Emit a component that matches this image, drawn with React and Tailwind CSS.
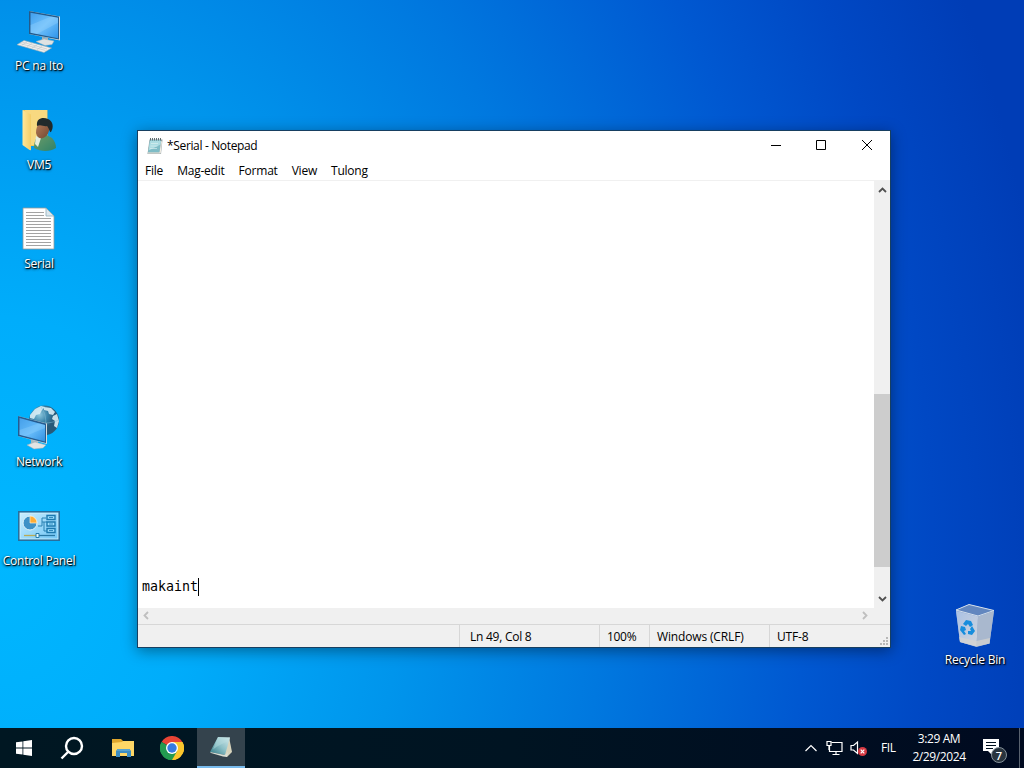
import React from 'react';

const PcIcon = () => (
  <svg width="48" height="48" viewBox="0 0 48 48">
    <defs>
      <linearGradient id="pcScreen" x1="0" y1="0" x2="1" y2="1">
        <stop offset="0" stopColor="#3f9fee" />
        <stop offset="0.5" stopColor="#6fc0fb" />
        <stop offset="1" stopColor="#2f94ea" />
      </linearGradient>
    </defs>
    <path d="M14 4l31 5.500v24L14 27z" fill="#d8dcdd" />
    <path d="M14 4l30 5.500v23L14 27z" fill="#235a8b" />
    <path d="M15.500 5.800l27.500 5v20.400l-27.500-5.400z" fill="url(#pcScreen)" />
    <path d="M15.500 18L36 9.600l7 1.200v5L22 27l-6.500-1.200z" fill="#a4dcff" opacity=".3" />
    <path d="M27 30l6 1v3l-6-1z" fill="#a9b3b8" />
    <path d="M21 34.500l8-2.500 10 2-2 3.500-7 1z" fill="#dfe3e3" stroke="#9eb0b8" strokeWidth=".5" />
    <path d="M9 33.500L36.500 41 29 45.500 2 37.700z" fill="#f0efed" stroke="#9faeb5" strokeWidth=".6" />
    <path d="M7 35l25 7M5 36.500l25.500 7M12 35l-5 3M17 36.500l-5 3M22 38l-5 3M27 39.500l-5 3" stroke="#bcc2c5" strokeWidth=".6" />
  </svg>
);

const UserFolderIcon = () => (
  <svg width="48" height="48" viewBox="0 0 48 48">
    <defs>
      <linearGradient id="folderFront" x1="0" y1="0" x2="1" y2="0">
        <stop offset="0" stopColor="#ffe79a" />
        <stop offset="1" stopColor="#f4cd67" />
      </linearGradient>
      <linearGradient id="userBody" x1="0" y1="0" x2="1" y2="1">
        <stop offset="0" stopColor="#6f9c68" />
        <stop offset="1" stopColor="#2f8268" />
      </linearGradient>
      <linearGradient id="userFace" x1="0" y1="0" x2="1" y2="1">
        <stop offset="0" stopColor="#b87b58" />
        <stop offset="1" stopColor="#704832" />
      </linearGradient>
    </defs>
    <path d="M8 4h24.500v36H14z" fill="#efc65c" />
    <path d="M10 4h22v35H15z" fill="#f8d980" />
    <path d="M7.500 4L16 8.500v35.800L14.500 44l-7-5z" fill="url(#folderFront)" />
    <path d="M19 42c0-9 4-14 11-14l7 4c3 3 4 7 4 10-6 4-15 4-22 0z" fill="url(#userBody)" />
    <path d="M21 30l5 2-3 9-3-3z" fill="#e5edde" />
    <path d="M25 16c-3 3-4 7-4 11 1 5 5 7 9 4 5-4 5-10 3-14z" fill="url(#userFace)" />
    <path d="M22 20c-1-8 6-9 11-7 5 2 6 8 3 13-1 1-2-4-4-6-3 1-6-2-10 0z" fill="#202a2b" />
  </svg>
);

const TextFileIcon = () => (
  <svg width="48" height="48" viewBox="0 0 48 48">
    <path d="M8 3h23l8 8v33H8z" fill="#fff" stroke="#96999a" strokeWidth=".8" />
    <path d="M31 3v8h8z" fill="#dce8ee" stroke="#8eacba" strokeWidth=".8" />
    <path d="M11 7.500h18M11 10.500h18M11 13.500h25M11 16.500h25M11 19.500h25M11 22.500h25M11 25.500h25M11 28.500h25M11 31.500h25M11 34.500h25M11 37.500h25M11 40.500h25" stroke="#989898" strokeWidth=".9" />
  </svg>
);

const NetworkIcon = () => (
  <svg width="48" height="48" viewBox="0 0 48 48">
    <defs>
      <radialGradient id="globe" cx="35%" cy="30%">
        <stop offset="0" stopColor="#8fc9df" />
        <stop offset="0.55" stopColor="#3984aa" />
        <stop offset="1" stopColor="#285978" />
      </radialGradient>
      <linearGradient id="netScreen" x1="0" y1="0" x2="1" y2="1">
        <stop offset="0" stopColor="#459fe9" />
        <stop offset="0.55" stopColor="#65bbfa" />
        <stop offset="1" stopColor="#328fe0" />
      </linearGradient>
    </defs>
    <circle cx="29" cy="17.500" r="15" fill="url(#globe)" />
    <path d="M15 12l5-6 6-3 4 1-3 3-2 4-4 1-2 4-4-1zM29 4l7 1 4 4-2 3-4-1-1-3-4-1zM38 13l4-2 2 7-2 7-3-2 1-5-3-2z" fill="#d8edf5" opacity=".9" />
    <path d="M26 4c6 8 6 18 2 28M15 18c9 3 20 3 29-1" stroke="#82bdd4" strokeWidth=".5" fill="none" />
    <path d="M16 36l7 2v5h-7z" fill="#a9b9bf" />
    <path d="M12 42l8-3 11 3-3 3-9 1z" fill="#e2e4e3" stroke="#9dadb5" strokeWidth=".5" />
    <path d="M3 13l29 7.500V41L3 33z" fill="#d6dcde" />
    <path d="M3 13l28 7.500V40L3 33z" fill="#255c91" />
    <path d="M4.500 15l25.500 7v16.500L4.500 31.800z" fill="url(#netScreen)" />
    <path d="M4.500 27L24 20.300l6 1.700v3L10 33.300l-5.500-1.500z" fill="#9ad8ff" opacity=".3" />
  </svg>
);

const ControlPanelIcon = () => (
  <svg width="48" height="48" viewBox="0 0 48 48">
    <defs>
      <linearGradient id="cpFill" x1="0" y1="0" x2="1" y2="1">
        <stop offset="0" stopColor="#c9edff" />
        <stop offset="1" stopColor="#70c6f5" />
      </linearGradient>
    </defs>
    <rect x="3" y="9" width="42" height="30" fill="#286f9d" />
    <rect x="5" y="11" width="38" height="26" fill="url(#cpFill)" stroke="#d8f4ff" strokeWidth=".8" />
    <circle cx="15" cy="21" r="7" fill="#3e91c7" stroke="#dff4fc" strokeWidth="1" />
    <path d="M15 21v-7a7 7 0 0 1 7 7z" fill="#ffad37" stroke="#fff1d4" strokeWidth=".7" />
    <path d="M23 24h4v-8h4M27 20h5M29 20v9h3" stroke="#2880b2" fill="none" />
    <path d="M32 13.500h8v4h-8zM32 20h8v4h-8zM32 26.500h8v4h-8z" fill="#9de0ff" stroke="#1c79af" strokeWidth="1.400" />
    <path d="M34 15.500h4M34 22h4M34 28.500h4" stroke="#318bc0" />
    <path d="M9 33.500h12" stroke="#b9ab56" strokeWidth="1.300" />
    <path d="M24 33.500h16" stroke="#2878a5" strokeWidth="1.300" />
    <path d="M21 31.500h3v4h-3z" fill="#e8faff" stroke="#247dad" />
  </svg>
);

const RecycleBinIcon = () => (
  <svg width="48" height="48" viewBox="0 0 48 48">
    <defs>
      <linearGradient id="binFront" x1="0" y1="0" x2="1" y2="1">
        <stop offset="0" stopColor="#a9c1e4" />
        <stop offset="1" stopColor="#d0d4dc" />
      </linearGradient>
    </defs>
    <path d="M5 9L18 3.500 43 9.500l-4.500 33-13 3.500L9 41z" fill="#8eabd5" />
    <path d="M5 9l22 6 16-5.500L18 3.500z" fill="#6387bf" stroke="#d3deeb" strokeWidth="1" />
    <path d="M5 10l22 5.500-1.500 30L9 41z" fill="url(#binFront)" />
    <path d="M27 15.500L43 10l-4.500 32.500-13 3z" fill="#a9b8ce" />
    <path d="M8 36l17.500 4L39 37l-.5 5.500-13 3L9 41z" fill="#d7d4d0" opacity=".7" />
    <path d="M12 23l3-4 5 1 2 4-3 2-2-3-2 2zM21 25l3 5-3 4-4-1v-3h3l-1-2zM10 25l4 1 1 3-2 1 2 3-2 1-4-5z" fill="#168ddd" />
  </svg>
);

const NotepadIcon = () => (
  <svg width="16" height="17" viewBox="0 0 16 17">
    <path d="M2.500 1.500h13L14 16H.5z" fill="#93a1a5" />
    <path d="M3 2h11l-1.500 12.500H1z" fill="#7fbcc6" />
    <path d="M3 2.500h11l-.4 4-12 6z" fill="#b8e4e8" opacity=".8" />
    <path d="M1 14.500h11.500L14.200 3l.8.500-1.300 12H1z" fill="#f0ede4" />
    <path d="M4 5.500h7M3.500 8h7M3 10.500h7" stroke="#e2f3f4" strokeWidth=".6" />
    <path d="M3.500 0v2.500M5.500 0v2.500M7.500 0v2.500M9.500 0v2.500M11.500 0v2.500M13.500 0v2.500" stroke="#4f6064" strokeWidth=".9" />
  </svg>
);

const desktopItems = [
  { name: 'PC na Ito', icon: PcIcon, spacing: 'tracking-[-0.2px]' },
  { name: 'VM5', icon: UserFolderIcon, spacing: 'tracking-[-0.3px]' },
  { name: 'Serial', icon: TextFileIcon, spacing: 'tracking-[-0.2px]' },
  null,
  { name: 'Network', icon: NetworkIcon, spacing: 'tracking-[-0.25px]' },
  { name: 'Control Panel', icon: ControlPanelIcon, spacing: 'tracking-[-0.25px]' },
];

const menuItems = ['File', 'Mag-edit', 'Format', 'View', 'Tulong'];

const DesktopItem = ({ item }) => (
  <div className="flex h-[99px] w-[78px] flex-col items-center">
    <item.icon />
    <span
      className={`mt-[3px] whitespace-nowrap text-xs leading-4 text-white [text-shadow:1px_1px_1px_#000,0_1px_3px_#000] ${item.spacing}`}
    >
      {item.name}
    </span>
  </div>
);

const Chevron = ({ d, color = '#505050' }) => (
  <svg width="9" height="9" viewBox="0 0 9 9" fill="none" stroke={color} strokeWidth="1.800">
    <path d={d} />
  </svg>
);

const TitleBar = () => (
  <div className="flex h-[30px] shrink-0 items-center pl-[9px]">
    <NotepadIcon />
    <span className="ml-1 flex-1 text-xs tracking-[-0.35px]">*Serial - Notepad</span>
    <div className="flex items-center pb-0.5 text-black">
      <div className="flex w-[45px] justify-center">
        <svg width="10" height="10" viewBox="0 0 10 10"><path d="M0 5.500h10" stroke="currentColor" /></svg>
      </div>
      <div className="flex w-[46px] justify-center">
        <svg width="10" height="10" viewBox="0 0 10 10"><path d="M.5.500h9v9h-9z" fill="none" stroke="currentColor" /></svg>
      </div>
      <div className="flex w-[46px] justify-center">
        <svg width="10" height="10" viewBox="0 0 10 10"><path d="M0 0l10 10M10 0L0 10" stroke="currentColor" /></svg>
      </div>
    </div>
  </div>
);

const StatusBar = () => (
  <div className="flex h-[23px] shrink-0 items-stretch border-t border-[#d7d7d7] bg-[#f0f0f0] text-xs leading-[23px]">
    <div className="w-[322px] border-r border-[#d7d7d7]" />
    <div className="w-[140px] border-r border-[#d7d7d7] pl-[10px] tracking-[-0.25px]">Ln 49, Col 8</div>
    <div className="w-[50px] border-r border-[#d7d7d7] pl-[7px] tracking-[-0.3px]">100%</div>
    <div className="w-[120px] border-r border-[#d7d7d7] pl-[7px] tracking-[-0.15px]">Windows (CRLF)</div>
    <div className="flex-1 pl-[7px] tracking-[-0.15px]">UTF-8</div>
    <svg className="self-end" width="11" height="11" viewBox="0 0 11 11" fill="#b8b8b8">
      <path d="M7 1h2v2H7zM4 4h2v2H4zM7 4h2v2H7zM1 7h2v2H1zM4 7h2v2H4zM7 7h2v2H7z" />
    </svg>
  </div>
);

const NotepadWindow = () => (
  <div className="absolute left-[137px] top-[130px] flex h-[518px] w-[754px] flex-col border border-[#173f61] bg-white text-black shadow-[0_3px_14px_rgba(0,0,0,0.4)]">
    <TitleBar />
    <div className="flex h-[19px] shrink-0 items-center gap-[14px] pl-[7px] text-xs">
      {menuItems.map((label) => (
        <span key={label} className="tracking-[-0.22px]">{label}</span>
      ))}
    </div>
    <div className="h-px shrink-0 bg-[#f0f0f0]" />
    <div className="flex min-h-0 flex-1">
      <div className="flex flex-1 items-end pb-[12px] pl-1">
        <span className="font-['DejaVu_Sans_Mono',monospace] text-[13.3px] leading-[18px]">makaint</span>
        <span className="h-[18px] w-px bg-black" />
      </div>
      <div className="flex w-4 flex-col items-center bg-[#f0f0f0]">
        <div className="flex h-[18px] items-center"><Chevron d="M1 6l3.500-3.500L8 6" /></div>
        <div className="mt-[195px] h-[173px] w-full bg-[#cdcdcd]" />
        <div className="mt-auto flex h-[19px] items-center"><Chevron d="M1 3l3.500 3.500L8 3" /></div>
      </div>
    </div>
    <div className="flex h-[16px] shrink-0 items-center justify-between bg-[#f0f0f0] pb-px pl-1 pr-[21px]">
      <Chevron d="M6 1L2.500 4.500 6 8" color="#bfbfbf" />
      <Chevron d="M3 1l3.500 3.500L3 8" color="#bfbfbf" />
    </div>
    <StatusBar />
  </div>
);

const ChromeIcon = () => (
  <svg width="24" height="24" viewBox="0 0 24 24">
    <path d="M12 12L1.600 6A12 12 0 0 1 22.400 6z" fill="#e84435" />
    <path d="M12 12L22.400 6A12 12 0 0 1 12 24z" fill="#fbc62d" />
    <path d="M12 12v12A12 12 0 0 1 1.600 6z" fill="#239a50" />
    <path d="M12 6h10.400A12 12 0 0 1 12 24l5.200-9z" fill="#fbc62d" />
    <path d="M1.600 6l5.200 9L12 18v6A12 12 0 0 1 1.600 6z" fill="#239a50" />
    <path d="M12 18l5.200-3L12 24z" fill="#239a50" />
    <circle cx="12" cy="12" r="6" fill="#fff" />
    <circle cx="12" cy="12" r="4.700" fill="#367be2" />
  </svg>
);

const Taskbar = () => (
  <div className="flex h-10 shrink-0 items-stretch bg-gradient-to-r from-[#001722] via-[#001422] to-[#000a20] text-white">
    <div className="flex w-12 items-center justify-center">
      <svg width="16" height="16" viewBox="0 0 16 16" fill="#fff">
        <path d="M0 2.300L6.500 1.400v6.200H0zM7.300 1.300L16 0v7.600H7.300zM0 8.400h6.500v6.200L0 13.700zM7.300 8.400H16V16l-8.700-1.300z" />
      </svg>
    </div>
    <div className="flex w-12 items-center justify-center">
      <svg width="24" height="24" viewBox="0 0 24 24" fill="none" stroke="#fff" strokeWidth="2.400">
        <circle cx="14" cy="10" r="8" />
        <path d="M8.500 15.500L1.500 22.500" />
      </svg>
    </div>
    <div className="ml-[3px] flex w-12 items-center justify-center">
      <svg width="22" height="18" viewBox="0 0 22 18">
        <path d="M0 0h9l2 2h11v3H0z" fill="#dfa62d" />
        <path d="M0 4l10-1 1-1h11v15H0z" fill="#ffd766" />
        <path d="M4 18v-6l1.500-2h12l1.500 2v6h-4v-4H8v4z" fill="#3c8dc3" />
        <path d="M5 10h13v2H5z" fill="#58a3cf" />
      </svg>
    </div>
    <div className="flex w-[50px] items-center justify-center"><ChromeIcon /></div>
    <div className="flex w-12 items-center justify-center border-b-2 border-[#78bbed] bg-[#34434d]">
      <svg width="24" height="22" viewBox="0 0 24 22">
        <defs>
          <linearGradient id="taskPad" x1="0" y1="1" x2="1" y2="0">
            <stop offset="0" stopColor="#2f7884" />
            <stop offset="0.5" stopColor="#8bbfc6" />
            <stop offset="1" stopColor="#d7eced" />
          </linearGradient>
        </defs>
        <path d="M20 1l3 15-5 5-3-2z" fill="#d7d4bd" />
        <path d="M9 1l12 .5L16 19 1 16z" fill="url(#taskPad)" />
        <path d="M9 1l12 .5-1 3-12 6-4 3z" fill="#b9dde0" opacity=".45" />
        <path d="M1 16l15 3 3-3-1 5-4-.5L2 17z" fill="#dbe0d6" />
      </svg>
    </div>
    <div className="ml-auto flex items-center">
      <svg width="12" height="8" viewBox="0 0 12 8" fill="none" stroke="#fff" strokeWidth="1.200">
        <path d="M.5 7L6 1.500 11.500 7" />
      </svg>
      <svg className="ml-[9px]" width="17" height="16" viewBox="0 0 17 16" fill="none" stroke="#fff" strokeWidth="1.200">
        <path d="M5.500 2.500H16v9H3.500V6M10 11.500v3M6.500 14.500h7" />
        <path d="M1 1.500h4v4H1zM3 5.500V10" />
      </svg>
      <svg className="ml-[7px]" width="18" height="18" viewBox="0 0 18 18" fill="none">
        <path d="M1 6.500h2.500L7.500 3v11.500l-4-3.500H1z" stroke="#fff" strokeWidth="1.200" />
        <circle cx="12.500" cy="12.500" r="4.500" fill="#d63a43" />
        <path d="M10.700 10.700l3.600 3.600M14.300 10.700l-3.600 3.600" stroke="#fff" strokeWidth="1.200" />
      </svg>
      <span className="ml-[13px] w-[18px] text-xs tracking-[-0.4px]">FIL</span>
      <div className="ml-[8px] w-16 text-center text-xs leading-[18px] tracking-[-0.4px]">
        <div>3:29 AM</div>
        <div>2/29/2024</div>
      </div>
      <div className="relative ml-[12px] h-6 w-[24px]">
        <svg width="24" height="24" viewBox="0 0 24 24">
          <path d="M0 3h16v12H9v4l-4-4H0z" fill="#fff" />
          <path d="M3 6.500h10M3 9.500h10M3 12.500h7" stroke="#00101f" />
        </svg>
        <span className="absolute left-2 top-[11px] flex size-4 items-center justify-center rounded-full border border-[#85919a] bg-[#29343e] text-[11px] font-semibold leading-none">
          7
        </span>
      </div>
      <div className="ml-[12px] mr-1 h-10 w-px bg-[#59626f]" />
    </div>
  </div>
);

const App = () => {
  return (
    <div className="flex h-screen w-screen flex-col overflow-hidden bg-[radial-gradient(ellipse_1060px_1350px_at_0px_560px,#00b7ff_0%,#00adfb_18%,#0095ec_38%,#0078df_57%,#0058d1_76%,#0048c4_88%,#003db6_100%)] font-['Open_Sans','Noto_Sans',sans-serif]">
      <main className="relative flex min-h-0 flex-1 justify-between">
        <div className="flex flex-col pt-[7px]">
          {desktopItems.map((item, i) =>
            item ? <DesktopItem key={item.name} item={item} /> : <div key={i} className="h-[99px]" />
          )}
        </div>
        <div className="flex items-end pb-[28px] pr-[10px]">
          <DesktopItem item={{ name: 'Recycle Bin', icon: RecycleBinIcon, spacing: 'tracking-[-0.2px]' }} />
        </div>
        <NotepadWindow />
      </main>
      <Taskbar />
    </div>
  );
};

export default App;
